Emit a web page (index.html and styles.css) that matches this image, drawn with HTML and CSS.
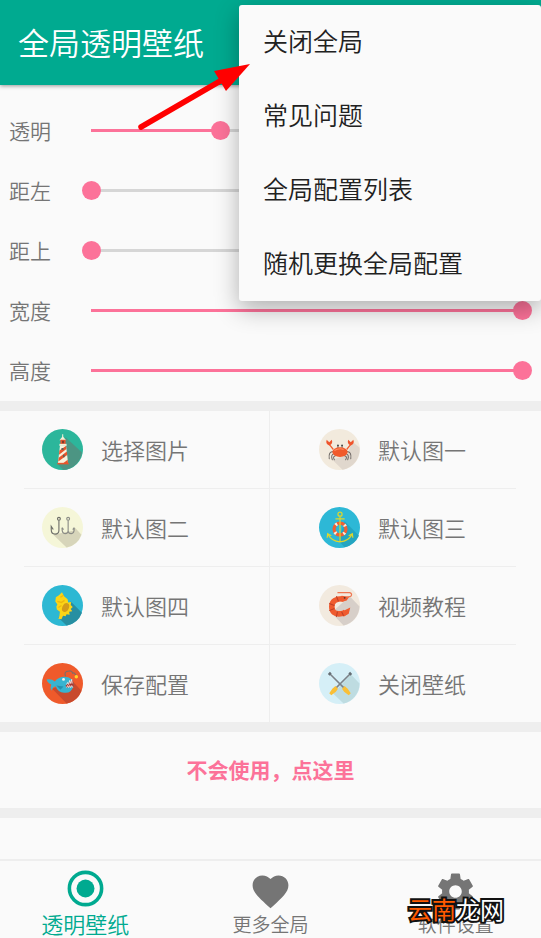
FILE: index.html
```html
<!DOCTYPE html>
<html lang="zh-CN">
<head>
<meta charset="utf-8">
<meta name="viewport" content="width=device-width, initial-scale=1">
<title>全局透明壁纸</title>
<link rel="stylesheet" href="styles.css">
</head>
<body>
<header class="app-bar">
  <h1 class="app-title">全局透明壁纸</h1>
  <div class="menu">
    <button class="menu-item" type="button">关闭全局</button>
    <button class="menu-item" type="button">常见问题</button>
    <button class="menu-item" type="button">全局配置列表</button>
    <button class="menu-item" type="button">随机更换全局配置</button>
  </div>
  <svg class="arrow" viewBox="0 0 116 70" aria-hidden="true">
    <path d="M5 65 86 18" fill="none" stroke="#f00" stroke-width="5.5" stroke-linecap="round"/>
    <path d="M114 2 78 9l12 20z" fill="#f00"/>
  </svg>
</header>

<main class="content">
  <section class="sliders">
    <div class="slider-row"><label for="alpha">透明</label><input id="alpha" type="range" min="0" max="100" value="30" style="--value:.3"></div>
    <div class="slider-row"><label for="left">距左</label><input id="left" type="range" min="0" max="100" value="0" style="--value:0"></div>
    <div class="slider-row"><label for="top">距上</label><input id="top" type="range" min="0" max="100" value="0" style="--value:0"></div>
    <div class="slider-row"><label for="width">宽度</label><input id="width" type="range" min="0" max="100" value="100" style="--value:1"></div>
    <div class="slider-row"><label for="height">高度</label><input id="height" type="range" min="0" max="100" value="100" style="--value:1"></div>
  </section>

  <section class="actions">
    <button class="action" type="button">
      <svg class="badge" viewBox="0 0 40 40" aria-hidden="true">
        <circle cx="20" cy="20" r="20" fill="#2cb69b"/>
        <path d="M23 8 39 23A20 20 0 0 1 21 40l-6-6z" fill="#4c9583"/>
        <path d="M19.700 5h1v4h-1z" fill="#f7f0d8"/>
        <path d="m17 11 3.200-4 3.300 4z" fill="#f7f0d8"/>
        <path d="M18 10.500h5V15h-5z" fill="#e5512b"/>
        <path d="M19.500 11.500h2v2.500h-2z" fill="#7c3d2b"/>
        <path d="M17 14.500h7v2h-7z" fill="#f7f0d8"/>
        <path d="M17.500 16.500h6L25.500 34h-10z" fill="#f9f1dc"/>
        <path d="m17 21 6.300-4.500.5 3L16.600 25zM16.300 28l7.900-6 .4 3.300-8.700 6.500zM20 34l5-4 .5 4z" fill="#e8562c"/>
        <path d="M19 18.500h2v2h-2zM20.500 25h1.500v2.500h-1.500z" fill="#5c6258"/>
        <path d="M15 33h11v1.500H15z" fill="#e8562c"/>
      </svg>
      <span>选择图片</span>
    </button>
    <button class="action" type="button">
      <svg class="badge" viewBox="0 0 40 40" aria-hidden="true">
        <circle cx="20" cy="20" r="20" fill="#f2eadd"/>
        <path d="m32 12 7.500 6A20 20 0 0 1 23 39.700L13 30l15-5z" fill="#e0d7cd"/>
        <g fill="none" stroke="#6f6865" stroke-width="1" stroke-linecap="round"><path d="M14 22q-5 0-4 7M15 24q-4 1-2 6M16 26q-3 1-1 4M27 22q5 0 4 7M26 24q4 1 2 6M25 26q3 1 1 4M18.500 19v-3M22.500 19v-3"/></g>
        <path d="m14 20-4-5M27 20l4-5" stroke="#ef5c2f" stroke-width="1.200"/>
        <path d="M7.500 10.500 10 13l2.500-2.500q1.500 4-2.500 5.500-4-1.500-2.500-5.500zM28.500 10.500 31 13l2.500-2.500q1.500 4-2.500 5.500-4-1.500-2.500-5.500z" fill="#ef542c"/>
        <ellipse cx="20.500" cy="22.500" rx="7.500" ry="4.700" fill="#f15a2b"/>
        <path d="M15 21q5-3 9-1" fill="none" stroke="#ff8d62"/>
        <circle cx="18.500" cy="16" r=".9" fill="#444"/><circle cx="22.500" cy="16" r=".9" fill="#444"/>
      </svg>
      <span>默认图一</span>
    </button>
    <button class="action" type="button">
      <svg class="badge" viewBox="0 0 40 40" aria-hidden="true">
        <circle cx="20" cy="20" r="20" fill="#f5f6d8"/>
        <path d="m11 27 20-4 1-3 6.500 7A20 20 0 0 1 24 39.600z" fill="#d7d5ba"/>
        <g fill="none" stroke="#6d6e68" stroke-width="1.100"><circle cx="16.500" cy="11.500" r="1.400"/><path d="M16.500 13v10q0 3.500-3.800 3.500Q9 26.500 9 22v-3l2 3"/></g>
        <g fill="none" stroke="#8b8c86" stroke-width="1.100"><circle cx="25.500" cy="11.500" r="1.400"/><path d="M25.500 13v12M19.500 20.500q0 5.500 3 5.500t3-3q0 3 3 3t3-5.500M19.500 20l1.500 2M31.500 20 30 22"/></g>
      </svg>
      <span>默认图二</span>
    </button>
    <button class="action" type="button">
      <svg class="badge" viewBox="0 0 40 40" aria-hidden="true">
        <circle cx="20" cy="20" r="20" fill="#2db8d6"/>
        <path d="m25 14 14 14A20 20 0 0 1 25 39.300L19 33z" fill="#24a5c1"/>
        <circle cx="20.500" cy="21.500" r="5.800" fill="none" stroke="#ef6035" stroke-width="3.200"/>
        <circle cx="20.500" cy="21.500" r="5.800" fill="none" stroke="#f5eee2" stroke-width="3.200" stroke-dasharray="1.800 7.310" stroke-dashoffset="-3.700"/>
        <g fill="none" stroke="#ddd62d" stroke-width="1.200"><circle cx="20.500" cy="7" r="2"/><path d="M20.500 9v25M16 11.500h9M9 27q3 6 11.500 7Q29 33 32 27M8 30l.5-4 3.500 2M33 30l-.5-4-3.500 2"/></g>
      </svg>
      <span>默认图三</span>
    </button>
    <button class="action" type="button">
      <svg class="badge" viewBox="0 0 40 40" aria-hidden="true">
        <circle cx="20" cy="20" r="20" fill="#2db8d3"/>
        <path d="m28 16 11 11A20 20 0 0 1 24 39.600L16 32z" fill="#278fa2"/>
        <path d="m19.500 7 2 4 3.500 3 .5 3 3-.5-.5 3 2 2-2 2 1.500 2-3 .5.500 3-3-.5-1 2-2.500-.500-1.500 3.500-3-.500 1-3 .5-4-3-2-.5-3 1-2-2-3 .5-4 3-2z" fill="#fbd516"/>
        <ellipse cx="23" cy="22" rx="3.200" ry="4.500" transform="rotate(25 23 22)" fill="#d39b19"/>
        <path d="m15 16 4 1 3-2M16 22l3-2M21 10l-3 2" fill="none" stroke="#eeb70e" stroke-width="1.300"/>
      </svg>
      <span>默认图四</span>
    </button>
    <button class="action" type="button">
      <svg class="badge" viewBox="0 0 40 40" aria-hidden="true">
        <circle cx="20" cy="20" r="20" fill="#f2eadf"/>
        <path d="m30 11 9.500 10A20 20 0 0 1 24 39.600L12 27z" fill="#d7cfc9"/>
        <path d="M24 13.500Q12.500 13 12.500 21T21 28q3 0 5-2" fill="none" stroke="#ef5b2f" stroke-width="5.500"/>
        <path d="m22 10.500 7.500 1L27 15l-5 1.500zM23 25.500l7.500-3.500-1.500 6-5 3z" fill="#ef5b2f"/>
        <path d="m17 11 2 5M10 18l5 2M10 25l5-2M17 31l1-5M24 30l-2-4" stroke="#bd3f27" stroke-width="1"/>
        <path d="M18 7.500h12q3 1 1 3.500l-4 1" fill="none" stroke="#ef7550" stroke-width="1.200"/>
        <circle cx="25" cy="12.500" r=".9" fill="#513630"/>
      </svg>
      <span>视频教程</span>
    </button>
    <button class="action" type="button">
      <svg class="badge" viewBox="0 0 40 40" aria-hidden="true">
        <circle cx="20" cy="20" r="20" fill="#ef5a2b"/>
        <path d="m30 18 8.500 9A20 20 0 0 1 24 39.600L10 25z" fill="#c84a2d"/>
        <path d="M4.500 16q5-1 8 2 5-6 13-4 5 2 5 6v3q-2 7-9 6-6 0-8-6-3 0-4 4-2-3-.500-6-4-2-4.500-5z" fill="#37b4d0"/>
        <path d="m30 16-7 6 1 2 7-1z" fill="#a83730"/>
        <path d="m24 21 1-2 1 2 1-4 1 3 1-4 .5 4M24 24l1-2 1 2 1-2 1 2 1-2 1 2" fill="none" stroke="#f8eeea" stroke-width=".8"/>
        <path d="m14 22 4 4 3-3" fill="#238fae"/>
        <circle cx="21" cy="16" r="1.400" fill="#f5f5ec"/>
        <path d="M23 13q-2-5 3-5 3-1 4 2 2-1 3 2" fill="none" stroke="#846c64" stroke-width="1.200"/>
        <circle cx="33.500" cy="13.500" r="1.700" fill="#ffd12c"/>
      </svg>
      <span>保存配置</span>
    </button>
    <button class="action" type="button">
      <svg class="badge" viewBox="0 0 40 40" aria-hidden="true">
        <circle cx="20" cy="20" r="20" fill="#d5eff7"/>
        <path d="m31 11 8.500 9A20 20 0 0 1 24 39.600L14 30l7-8z" fill="#bedce1"/>
        <path d="m10.500 10.500 16 16M30.500 10.500l-16 16" stroke="#7c8288" stroke-width="1.500"/>
        <path d="m9.500 11.500 2-2M29.500 9.500l2 2" stroke="#666d73" stroke-width="2.400"/>
        <path d="m16 22.500 2.500 2.500-2 3-4.500 3.500-2-2 3-4.500zM25 22.500 22.500 25l2 3 4.500 3.500 2-2-3-4.500z" fill="#f9bf37"/>
      </svg>
      <span>关闭壁纸</span>
    </button>
  </section>

  <a class="help" href="#help">不会使用，点这里</a>
</main>

<nav class="tabs">
  <a class="tab active" href="#wallpaper">
    <svg class="tab-icon" viewBox="0 0 24 24" aria-hidden="true"><circle cx="12" cy="12" r="9" fill="none" stroke="currentColor" stroke-width="2"/><circle cx="12" cy="12" r="5" fill="currentColor"/></svg>
    <span>透明壁纸</span>
  </a>
  <a class="tab" href="#more">
    <svg class="tab-icon" viewBox="0 0 24 24" aria-hidden="true"><path fill="currentColor" d="M12 21.350l-1.450-1.320C5.400 15.360 2 12.280 2 8.500 2 5.420 4.420 3 7.500 3c1.740 0 3.410.81 4.500 2.090C13.090 3.810 14.760 3 16.500 3 19.580 3 22 5.420 22 8.500c0 3.780-3.400 6.860-8.550 11.540z"/></svg>
    <span>更多全局</span>
  </a>
  <a class="tab" href="#settings">
    <svg class="tab-icon" viewBox="0 0 24 24" aria-hidden="true"><path fill="currentColor" d="M19.430 12.980c.04-.32.07-.64.07-.98s-.03-.66-.07-.98l2.110-1.650c.19-.15.24-.42.12-.64l-2-3.460c-.12-.22-.39-.3-.61-.22l-2.490 1c-.52-.4-1.080-.73-1.690-.98l-.38-2.650C14.460 2.180 14.250 2 14 2h-4c-.25 0-.46.18-.49.42l-.38 2.650c-.61.25-1.170.59-1.690.98l-2.490-1c-.23-.09-.49 0-.61.22l-2 3.460c-.13.22-.07.49.12.64l2.110 1.650c-.04.32-.07.65-.07.98s.03.66.07.98l-2.110 1.650c-.19.15-.24.42-.12.64l2 3.460c.12.22.39.3.61.22l2.490-1c.52.4 1.080.73 1.690.98l.38 2.650c.03.24.24.42.49.42h4c.25 0 .46-.18.49-.42l.38-2.650c.61-.25 1.170-.59 1.690-.98l2.490 1c.23.09.49 0 .61-.22l2-3.460c.12-.22.07-.49-.12-.64l-2.110-1.650zM12 15.500c-1.930 0-3.500-1.570-3.500-3.500s1.570-3.500 3.500-3.500 3.500 1.570 3.500 3.500-1.570 3.500-3.500 3.500z"/></svg>
    <span>软件设置</span>
  </a>
  <div class="watermark"><span class="watermark-accent">云南</span>龙网</div>
</nav>
</body>
</html>
```
FILE: styles.css
```css
* {
  box-sizing: border-box;
}

:root {
  --green: #00aa90;
  --pink: #fc7299;
  --paper: #fafafa;
  --band: #eeeeee;
  --text: #757575;
}

body {
  margin: 0;
  min-height: 100vh;
  display: flex;
  flex-direction: column;
  background: var(--paper);
  color: var(--text);
  font-family: "Noto Sans CJK SC", sans-serif;
  font-size: 21px;
  font-weight: 350;
}

button {
  border: 0;
  padding: 0;
  background: none;
  color: inherit;
  font: inherit;
  text-align: left;
}

a {
  color: inherit;
  text-decoration: none;
}

.app-bar {
  position: relative;
  z-index: 1;
  display: flex;
  align-items: center;
  height: 85px;
  padding: 0 18px 2px;
  background: var(--green);
  box-shadow: 0 1px 4px rgba(0, 0, 0, 0.4);
}

.app-title {
  margin: 0;
  color: #fff;
  font-size: 31px;
  font-weight: 350;
}

.menu {
  position: absolute;
  top: 5px;
  right: 0;
  display: flex;
  flex-direction: column;
  width: 302px;
  border-radius: 3px;
  background: var(--paper);
  box-shadow: 0 8px 24px rgba(0, 0, 0, 0.3);
}

.menu-item {
  height: 74px;
  padding: 0 24px 4px;
  color: #212121;
  font-size: 25px;
}

.arrow {
  position: absolute;
  top: 62px;
  left: 136px;
  width: 116px;
  height: 70px;
}

.content {
  flex: 1;
}

.sliders {
  padding: 15px 9px 1px;
}

.slider-row {
  display: flex;
  align-items: center;
  height: 60px;
}

.slider-row label {
  width: 73px;
}

.slider-row input {
  flex: 1;
  min-width: 0;
  height: 20px;
  margin: 0;
  appearance: none;
  background:
    linear-gradient(var(--pink), var(--pink)) 9px 50% / calc((100% - 19px) * var(--value)) 3px no-repeat,
    linear-gradient(#d6d6d6, #d6d6d6) 9px 50% / calc(100% - 19px) 3px no-repeat;
}

.slider-row input::-webkit-slider-thumb {
  appearance: none;
  width: 19px;
  height: 19px;
  border-radius: 50%;
  background: var(--pink);
}

.actions {
  display: grid;
  grid-template-columns: 1fr 1fr;
  padding: 0 25px 0 24px;
  border-top: 10px solid var(--band);
  border-bottom: 10px solid var(--band);
}

.action {
  display: flex;
  align-items: center;
  gap: 18px;
  height: 78px;
  padding-left: 18px;
  border-bottom: 1px solid var(--band);
  font-size: 22px;
  line-height: 30px;
}

.action span {
  padding-bottom: 2px;
}

.action:nth-child(odd) {
  border-right: 1px solid var(--band);
}

.action:nth-child(even) {
  padding-left: 49px;
}

.action:nth-last-child(-n + 2) {
  height: 77px;
  border-bottom: 0;
}

.badge {
  flex: none;
  width: 41px;
  height: 41px;
}

.help {
  display: flex;
  align-items: center;
  justify-content: center;
  height: 86px;
  padding-bottom: 2px;
  border-bottom: 10px solid var(--band);
  color: var(--pink);
  font-weight: 700;
}

.tabs {
  position: relative;
  display: grid;
  grid-template-columns: 31.5% 1fr 31.5%;
  height: 79px;
  border-top: 2px solid var(--band);
}

.tab {
  display: flex;
  flex-direction: column;
  align-items: center;
  padding-top: 9px;
  font-size: 19px;
  line-height: 22px;
}

.tab.active {
  padding-top: 6px;
  color: var(--green);
  font-size: 22px;
  line-height: 26px;
}

.tab-icon {
  width: 43px;
  height: 43px;
}

.watermark {
  position: absolute;
  right: 37px;
  bottom: 14px;
  color: #fff;
  font-size: 24px;
  font-weight: 400;
  line-height: 30px;
  -webkit-text-stroke: 4px #111;
  paint-order: stroke fill;
}

.watermark-accent {
  color: #ff5a00;
}
```
